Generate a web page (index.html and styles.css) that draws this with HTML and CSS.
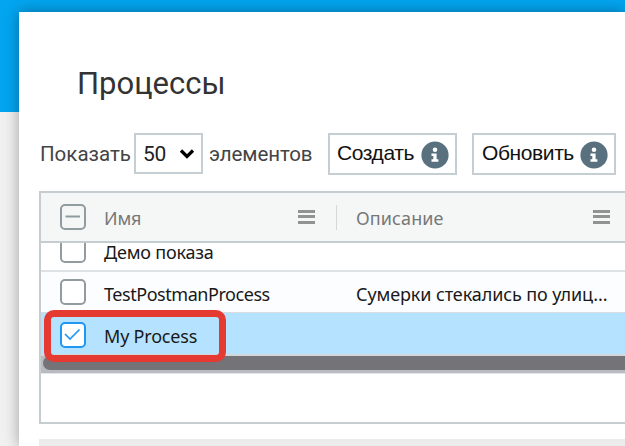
FILE: index.html
```html
<!DOCTYPE html>
<html lang="ru">
<head>
<meta charset="utf-8">
<title>Процессы</title>
<link rel="stylesheet" href="styles.css">
</head>
<body>
<main class="panel">
  <h1 class="title">Процессы</h1>
  <div class="toolbar">
    <span class="label show">Показать</span>
    <div class="select"><span class="value">50</span><svg width="16" height="12" viewBox="0 0 16 12"><path d="M2 2.5 8 8.5 14 2.5" fill="none" stroke="#000" stroke-width="3.2"/></svg></div>
    <span class="label items">элементов</span>
    <button class="btn create"><span>Создать</span><svg class="info" width="28" height="28" viewBox="0 0 28 28"><circle cx="14" cy="14" r="13.6" fill="#59707f"/><circle cx="14" cy="8.8" r="2.3" fill="#fff"/><path d="M10.5 12.5H15.6V18.3H17.4V20.8H10.5V18.3H12.3V15H10.5Z" fill="#fff"/></svg></button>
    <button class="btn refresh"><span>Обновить</span><svg class="info" width="28" height="28" viewBox="0 0 28 28"><circle cx="14" cy="14" r="13.6" fill="#59707f"/><circle cx="14" cy="8.8" r="2.3" fill="#fff"/><path d="M10.5 12.5H15.6V18.3H17.4V20.8H10.5V18.3H12.3V15H10.5Z" fill="#fff"/></svg></button>
  </div>
  <section class="grid">
    <div class="row head">
      <span class="check"><svg width="25" height="25" viewBox="0 0 25 25"><path d="M4.5 11.5H19" stroke="#8d9a9f" stroke-width="2"/></svg></span>
      <span class="name">Имя</span><i class="menu"></i><i class="divider"></i>
      <span class="desc">Описание</span><i class="menu last"></i>
    </div>
    <div class="row clipped"><span class="check"></span><span class="name">Демо показа</span></div>
    <div class="row second"><span class="check"></span><span class="name">TestPostmanProcess</span><span class="desc">Сумерки стекались по улиц...</span></div>
    <div class="row selected"><span class="check checked"><svg width="25" height="25" viewBox="0 0 25 25"><path d="M4 11 9 16 18.5 6.5" fill="none" stroke="#2196f3" stroke-width="1.7"/></svg></span><span class="name">My Process</span><div class="highlight"></div></div>
    <div class="scroll"><div class="thumb"></div></div>
  </section>
  <div class="strip"></div>
</main>
</body>
</html>
```
FILE: styles.css
```css
* { box-sizing: border-box; }
body { margin: 0; width: 625px; height: 446px; overflow: hidden; background: linear-gradient(#03a5f0 112px, #f1f1f1 112px); font-family: Roboto, sans-serif; }
.panel { margin: 12px 0 0 19px; width: 606px; height: 434px; padding: 53px 0 0 20px; background: #fff; box-shadow: 0 0 14px rgba(0,0,0,.35); }
.title { margin: 0 0 0 38px; height: 68px; font-size: 31px; line-height: 37px; font-weight: 400; color: #333; letter-spacing: 0; }
.toolbar { display: flex; align-items: flex-start; height: 58px; }
.toolbar > * { flex: none; }
.label { font-size: 20.5px; line-height: 42px; color: #444; white-space: nowrap; }
.show { width: 95px; padding-left: 1px; letter-spacing: 0; }
.select { display: flex; align-items: center; justify-content: space-between; width: 69px; height: 41px; padding: 0 6px 0 7px; border: 2px solid #c5ced2; color: #222; font-size: 21px; }
.value { letter-spacing: -.2px; }
.items { width: 125px; padding-left: 6px; letter-spacing: -.1px; }
.btn { display: flex; align-items: flex-start; justify-content: space-between; height: 42px; padding: 0 6px 0 7px; background: #fff; border: 2px solid #c5ced2; color: #111; font: 21px/36px "Liberation Sans", sans-serif; letter-spacing: -.4px; white-space: nowrap; }
.info { margin-top: 6px; flex: none; }
.create { width: 129px; margin-right: 15px; }
.refresh { width: 144px; padding-left: 8px; }
.grid { height: 233px; border: 2px solid #c5cdd0; border-right: 0; font: 18px/26px "Noto Sans", sans-serif; color: #191919; }
.row { display: flex; align-items: center; padding-left: 19px; white-space: nowrap; }
.row > * { flex: none; }
.head { height: 50px; background: #f5f7f7; border-bottom: 2px solid #c5cdd0; color: #777; }
.check { width: 26px; height: 26px; border: 2px solid #929c9f; border-radius: 5px; background: #fff; }
.check svg { display: block; margin: -1px; }
.head .check { background: none; }
.name { width: 252px; margin-left: 18px; letter-spacing: -.2px; }
.head .name { width: 194px; padding-top: 2px; }
.menu { width: 17px; height: 14px; background: repeating-linear-gradient(#929292 0 3px, transparent 3px 5.3px); }
.divider { width: 1px; height: 25px; margin: 0 19px 0 21px; background: #d5d8d9; }
.desc { letter-spacing: -.1px; }
.head .desc { width: 237px; padding-top: 2px; letter-spacing: .1px; }
.clipped { height: 29px; overflow: hidden; align-items: flex-end; padding-bottom: 7px; border-bottom: 2px solid #dfe2e5; }
.clipped .name { margin-bottom: -2px; }
.second { height: 41px; background: #fbfdff; border-bottom: 1px solid #d7dce0; }
.second .name { letter-spacing: -.45px; }
.second .name, .second .desc, .selected .name { padding-top: 3px; }
.selected { position: relative; height: 43px; padding-top: 2px; background: #b5e3ff; border-bottom: 2px solid #d1d7dc; }
.checked { border-color: #2196f3; }
.highlight { position: absolute; left: 3px; top: -3px; width: 182px; height: 52px; border: 7px solid #e43a31; border-radius: 10px; z-index: 1; }
.scroll { height: 18px; padding-left: 2px; background: #babbc0; border-bottom: 1px solid #e3e6e8; }
.thumb { height: 14px; background: #737378; border-radius: 7px 0 0 7px; }
.strip { height: 7px; margin-top: 15px; background: #ececec; }
```
